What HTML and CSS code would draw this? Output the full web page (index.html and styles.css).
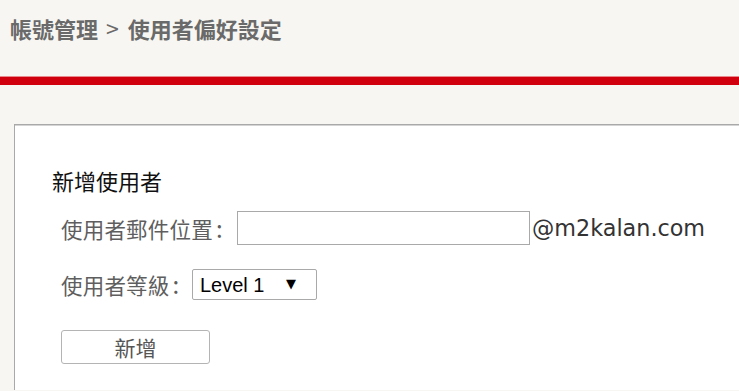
FILE: index.html
```html
<!DOCTYPE html>
<html lang="zh-Hant">
<head>
<meta charset="utf-8">
<title>使用者偏好設定</title>
<link rel="stylesheet" href="styles.css">
</head>
<body>
<div class="header">
  <div class="crumb">帳號管理<span class="sep">&gt;</span>使用者偏好設定</div>
</div>
<div class="redbar"></div>
<div class="panel">
  <h2 class="title">新增使用者</h2>
  <div class="row row-email">
    <label class="label" for="email">使用者郵件位置<span class="colon">:</span></label>
    <input class="email" id="email" type="text">
    <span class="domain">@m2kalan.com</span>
  </div>
  <div class="row row-level">
    <label class="label" for="level">使用者等級<span class="colon">:</span></label>
    <span class="select-wrap">
      <select class="level" id="level">
        <option>Level 1</option>
        <option>Level 2</option>
        <option>Level 3</option>
      </select>
      <span class="arrow">▼</span>
    </span>
  </div>
  <div class="row row-btn">
    <button class="add" type="button">新增</button>
  </div>
</div>
</body>
</html>
```
FILE: styles.css
```css
html, body {
  margin: 0;
  padding: 0;
  height: 100%;
}
body {
  background: #f7f6f2;
  font-family: "Noto Sans CJK TC", "Noto Sans", sans-serif;
  overflow: hidden;
}
.header {
  height: 77px;
  box-sizing: border-box;
  padding: 13px 0 0 10px;
}
.crumb {
  font-size: 22px;
  line-height: 30px;
  font-weight: bold;
  color: #6a6a6a;
}
.sep {
  display: inline-block;
  margin: 0 9px 0 8px;
  font-weight: normal;
  font-size: 23px;
}
.redbar {
  height: 8px;
  background: #d0000f;
  box-shadow: 0 -1px 0 #e88a8e;
}
.panel {
  margin: 39px 0 0 14px;
  background: #ffffff;
  border-top: 1px solid #a9a9a9;
  border-left: 1px solid #a9a9a9;
  box-shadow: inset 0 1px 0 #d4d4d4;
  height: 266px;
  padding: 40px 0 0 37px;
  box-sizing: border-box;
}
.title {
  margin: 0;
  font-size: 22px;
  line-height: 30px;
  font-weight: normal;
  color: #111;
}
.row {
  display: flex;
  align-items: center;
  padding-left: 9px;
}
.row-email {
  margin-top: 16px;
  height: 34px;
}
.row-level {
  margin-top: 24px;
  height: 31px;
}
.row-btn {
  margin-top: 30px;
}
.label {
  font-size: 21.5px;
  line-height: 30px;
  color: #5e5e5e;
  white-space: nowrap;
  letter-spacing: 0.2px;
}
.colon {
  margin-left: 3px;
  font-size: 24px;
}
.row-email .label {
  width: 164px;
}
.email {
  box-sizing: border-box;
  width: 293px;
  height: 34px;
  margin: 0 0 0 12px;
  border: 1px solid #a9a9a9;
  background: #fff;
  padding: 0 4px;
  outline: none;
}
.domain {
  margin-left: 2px;
  font-family: "DejaVu Sans", sans-serif;
  font-size: 22.3px;
  color: #333;
}
.row-level .label {
  width: 120px;
}
.select-wrap {
  position: relative;
  display: inline-block;
  margin-left: 11px;
}
.level {
  -webkit-appearance: none;
  appearance: none;
  box-sizing: border-box;
  width: 125px;
  height: 31px;
  border: 1px solid #a9a9a9;
  border-radius: 2px;
  background: #fff;
  padding: 0 0 0 7px;
  font-family: "Liberation Sans", Arial, sans-serif;
  font-size: 20px;
  color: #000;
  outline: none;
  display: block;
}
.arrow {
  position: absolute;
  right: 21px;
  top: 7px;
  font-family: "DejaVu Sans", sans-serif;
  font-size: 13px;
  line-height: 16px;
  color: #000;
  pointer-events: none;
}
.add {
  box-sizing: border-box;
  width: 149px;
  height: 34px;
  border: 1px solid #b4b4b4;
  border-radius: 3px;
  background: #fff;
  font-family: "Noto Sans CJK TC", sans-serif;
  font-size: 21px;
  line-height: 30px;
  color: #555;
  padding: 0;
  margin-left: 0;
}
```
